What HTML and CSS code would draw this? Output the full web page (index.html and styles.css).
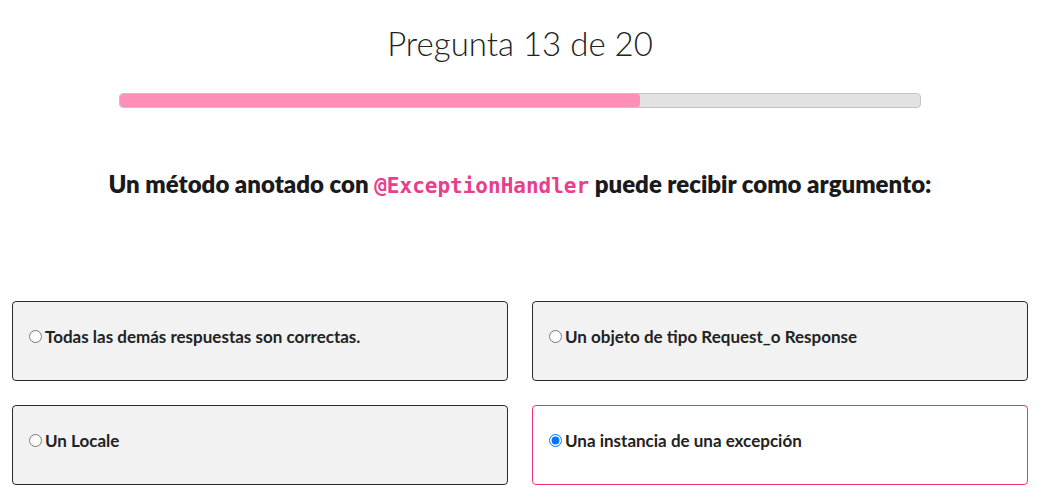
FILE: index.html
```html
<!DOCTYPE html>
<html lang="es">
<head>
<meta charset="utf-8">
<link rel="stylesheet" href="styles.css">
</head>
<body>
<main class="quiz">
  <h1 class="title">Pregunta 13 de 20</h1>
  <div class="progress"><div class="progress-fill" style="width: 65%"></div></div>
  <h2 class="question">Un método anotado con <code>@ExceptionHandler</code> puede recibir como argumento:</h2>
  <div class="answers">
    <label class="answer"><input type="radio" name="a"><span>Todas las demás respuestas son correctas.</span></label>
    <label class="answer"><input type="radio" name="a"><span>Un objeto de tipo Request_o Response</span></label>
    <label class="answer"><input type="radio" name="a"><span>Un Locale</span></label>
    <label class="answer selected"><input type="radio" name="a" checked><span>Una instancia de una excepción</span></label>
  </div>
</main>
</body>
</html>
```

FILE: styles.css
```css
html, body {
  margin: 0;
  padding: 0;
  background: #fff;
}
body {
  font-family: Lato, "Liberation Sans", sans-serif;
  color: #1d1d1f;
}
.quiz {
  width: 1016px;
  padding: 0 12px;
  box-sizing: content-box;
}
.title {
  margin: 0;
  padding-top: 22px;
  text-align: center;
  font-weight: 300;
  font-size: 33px;
  line-height: 42px;
  color: #222;
}
.progress {
  width: 800px;
  height: 13px;
  margin: 29px auto 0;
  border: 1px solid #c4c4c4;
  border-radius: 4px;
  background: #e2e2e2;
  overflow: hidden;
}
.progress-fill {
  height: 100%;
  background: #ff8fb9;
  border-radius: 3px;
}
.question {
  margin: 61px 0 0;
  text-align: center;
  font-weight: 800;
  font-size: 24px;
  line-height: 30px;
  color: #1a1a1c;
}
.question code {
  font-family: "DejaVu Sans Mono", monospace;
  font-weight: 700;
  font-size: 21px;
  line-height: 1;
  color: #e83e8c;
}
.answers {
  display: grid;
  grid-template-columns: 1fr 1fr;
  gap: 24px;
  margin-top: 102px;
}
.answer {
  display: flex;
  align-items: center;
  height: 80px;
  box-sizing: border-box;
  padding: 0 16px 10px;
  border: 1px solid #2b2b2b;
  border-radius: 4px;
  background: #f2f2f2;
  font-weight: 700;
  font-size: 17px;
  color: #222;
}
.answer input {
  margin: 0 3px 0 0;
  width: 13px;
  height: 13px;
}
.answer.selected {
  background: #fff;
  border-color: #f0307a;
}
```
